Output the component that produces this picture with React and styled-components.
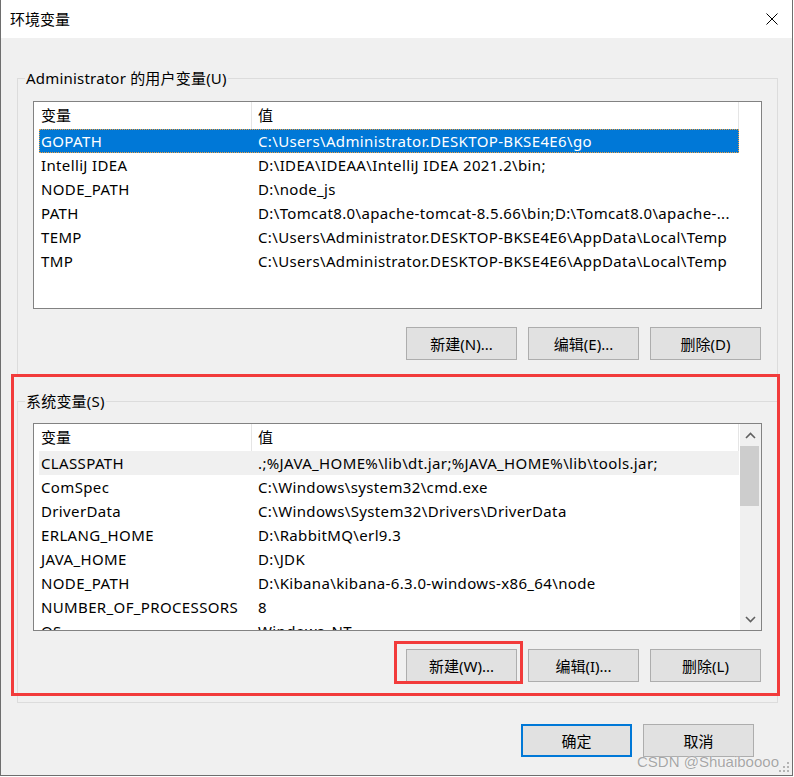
import styled, { createGlobalStyle } from 'styled-components';

const GlobalStyle = createGlobalStyle`
  html, body {
    margin: 0;
    padding: 0;
    background: #ffffff;
  }
  body {
    font-family: "Noto Sans", "Noto Sans CJK SC", sans-serif;
    font-size: 15px;
    color: #000;
  }
  * { box-sizing: border-box; }
`;

const userVars = [
  ['GOPATH', 'C:\\Users\\Administrator.DESKTOP-BKSE4E6\\go'],
  ['IntelliJ IDEA', 'D:\\IDEA\\IDEAA\\IntelliJ IDEA 2021.2\\bin;'],
  ['NODE_PATH', 'D:\\node_js'],
  ['PATH', 'D:\\Tomcat8.0\\apache-tomcat-8.5.66\\bin;D:\\Tomcat8.0\\apache-...'],
  ['TEMP', 'C:\\Users\\Administrator.DESKTOP-BKSE4E6\\AppData\\Local\\Temp'],
  ['TMP', 'C:\\Users\\Administrator.DESKTOP-BKSE4E6\\AppData\\Local\\Temp'],
];

const systemVars = [
  ['CLASSPATH', '.;%JAVA_HOME%\\lib\\dt.jar;%JAVA_HOME%\\lib\\tools.jar;'],
  ['ComSpec', 'C:\\Windows\\system32\\cmd.exe'],
  ['DriverData', 'C:\\Windows\\System32\\Drivers\\DriverData'],
  ['ERLANG_HOME', 'D:\\RabbitMQ\\erl9.3'],
  ['JAVA_HOME', 'D:\\JDK'],
  ['NODE_PATH', 'D:\\Kibana\\kibana-6.3.0-windows-x86_64\\node'],
  ['NUMBER_OF_PROCESSORS', '8'],
  ['OS', 'Windows_NT'],
];

const Chevron = ({ up }) => (
  <svg width="11" height="7" viewBox="0 0 11 7">
    <path
      d={up ? 'M1 6 L5.5 1.5 L10 6' : 'M1 1 L5.5 5.5 L10 1'}
      fill="none"
      stroke="#606060"
      strokeWidth="1.6"
    />
  </svg>
);

const VarList = ({ rows, selected, hover, scroll }) => (
  <ListBox>
    <ListMain>
      <HeaderRow>
        <HeaderCell>变量</HeaderCell>
        <HeaderCell $pad={6}>值</HeaderCell>
      </HeaderRow>
      {rows.map(([name, value], i) => (
        <Row key={name + i} $selected={i === selected} $hover={i === hover}>
          <Cell $pad={2}>{name}</Cell>
          <Cell $pad={7}>{value}</Cell>
        </Row>
      ))}
    </ListMain>
    {scroll && (
      <Scrollbar>
        <ScrollArrow>
          <Chevron up />
        </ScrollArrow>
        <Thumb />
        <ScrollTrack />
        <ScrollArrow>
          <Chevron />
        </ScrollArrow>
      </Scrollbar>
    )}
  </ListBox>
);

const App = () => {
  return (
    <>
      <GlobalStyle />
      <Window>
        <TitleBar>
          <Title>环境变量</Title>
          <CloseButton>
            <svg width="12" height="12" viewBox="0 0 12 12">
              <path d="M0.5 0.5 L11.5 11.5 M11.5 0.5 L0.5 11.5" stroke="#000" strokeWidth="1" />
            </svg>
          </CloseButton>
        </TitleBar>
        <Body>
          <Group>
            <Legend>Administrator 的用户变量(U)</Legend>
            <GroupContent $top={13} $bottom={15}>
              <VarList rows={userVars} selected={0} />
              <ButtonRow>
                <Button>新建(N)...</Button>
                <Button>编辑(E)...</Button>
                <Button>删除(D)</Button>
              </ButtonRow>
            </GroupContent>
          </Group>
          <Group $gap={15}>
            <Legend>系统变量(S)</Legend>
            <GroupContent $top={12} $bottom={20}>
              <VarList rows={systemVars} hover={0} scroll />
              <ButtonRow>
                <Button>新建(W)...</Button>
                <Button>编辑(I)...</Button>
                <Button>删除(L)</Button>
              </ButtonRow>
            </GroupContent>
          </Group>
          <Footer>
            <Button $primary>确定</Button>
            <Button>取消</Button>
          </Footer>
        </Body>

        <Mark $left={10} $top={374} $width={769} $height={322} />
        <Mark $left={393} $top={641} $width={129} $height={43} />
        <Watermark>CSDN @Shuaiboooo</Watermark>
        <Grip>
          <svg width="12" height="12" viewBox="0 0 12 12" fill="#b4b4b4">
            <rect x="8" y="0" width="2" height="2" />
            <rect x="4" y="4" width="2" height="2" />
            <rect x="8" y="4" width="2" height="2" />
            <rect x="0" y="8" width="2" height="2" />
            <rect x="4" y="8" width="2" height="2" />
            <rect x="8" y="8" width="2" height="2" />
          </svg>
        </Grip>
      </Window>
    </>
  );
};

const Window = styled.div`
  position: relative;
  width: 793px;
  height: 776px;
  display: flex;
  flex-direction: column;
  border-left: 1px solid #6e6e6e;
  border-right: 1px solid #6e6e6e;
  border-bottom: 1px solid #6e6e6e;
  overflow: hidden;
`;

const TitleBar = styled.div`
  height: 38px;
  flex: none;
  display: flex;
  align-items: center;
  justify-content: space-between;
  padding: 0 14px 0 9px;
  background: #ffffff;
`;

const Title = styled.div`
  font-size: 15px;
  line-height: 20px;
`;

const CloseButton = styled.div`
  width: 12px;
  height: 12px;
  display: flex;
`;

const Body = styled.div`
  flex: 1;
  background: #f0f0f0;
  padding: 30px 14px 0 16px;
`;

const Group = styled.fieldset`
  margin: ${(p) => p.$gap || 0}px 0 0 0;
  padding: 0;
  min-width: 0;
  border: 1px solid #dcdcdc;
`;

const Legend = styled.legend`
  margin-left: 7px;
  padding: 0 1px;
  font-size: 15px;
  line-height: 20px;
  letter-spacing: 0.2px;
  color: #000;
`;

const GroupContent = styled.div`
  padding: ${(p) => p.$top}px 15px ${(p) => p.$bottom}px 15px;
`;

const ListBox = styled.div`
  height: 208px;
  border: 1px solid #828282;
  background: #ffffff;
  display: flex;
  overflow: hidden;
`;

const ListMain = styled.div`
  flex: 1;
  overflow: hidden;
`;

const HeaderRow = styled.div`
  display: grid;
  grid-template-columns: 218px 487px;
  height: 27px;
`;

const HeaderCell = styled.div`
  padding-left: ${(p) => p.$pad || 7}px;
  line-height: 27px;
  border-right: 1px solid #e5e5e5;
`;

const Row = styled.div`
  display: grid;
  grid-template-columns: 212px 488px;
  width: 700px;
  height: 24px;
  margin-left: 5px;
  background: ${(p) => (p.$selected ? '#0078d7' : p.$hover ? '#f0f0f0' : 'transparent')};
  color: ${(p) => (p.$selected ? '#ffffff' : '#000')};
  outline: ${(p) => (p.$selected ? '1px dotted #f0a040' : 'none')};
  outline-offset: -1px;
`;

const Cell = styled.div`
  padding-left: ${(p) => p.$pad}px;
  line-height: 24px;
  letter-spacing: 0.36px;
  white-space: nowrap;
  overflow: hidden;
`;

const Scrollbar = styled.div`
  width: 21px;
  flex: none;
  background: #f0f0f0;
  display: flex;
  flex-direction: column;
`;

const ScrollArrow = styled.div`
  height: 22px;
  display: flex;
  align-items: center;
  justify-content: center;
  padding-right: 1px;
`;

const Thumb = styled.div`
  height: 60px;
  margin: 0 2px 0 0;
  background: #cdcdcd;
`;

const ScrollTrack = styled.div`
  flex: 1;
`;

const ButtonRow = styled.div`
  display: flex;
  justify-content: flex-end;
  gap: 11px;
  margin-top: 18px;
  padding-right: 1px;
`;

const Button = styled.div`
  width: 111px;
  height: 33px;
  display: flex;
  align-items: center;
  justify-content: center;
  background: #e1e1e1;
  border: ${(p) => (p.$primary ? '2px solid #0078d7' : '1px solid #adadad')};
  font-size: 15px;
  color: #000;
`;

const Footer = styled.div`
  display: flex;
  justify-content: flex-end;
  gap: 11px;
  margin-top: 21px;
  padding-right: 24px;
`;

const Mark = styled.div`
  position: absolute;
  left: ${(p) => p.$left}px;
  top: ${(p) => p.$top}px;
  width: ${(p) => p.$width}px;
  height: ${(p) => p.$height}px;
  border: 3px solid #f23b3b;
  pointer-events: none;
`;

const Watermark = styled.div`
  position: absolute;
  right: 13px;
  bottom: 3px;
  font-family: "Liberation Sans", Arial, sans-serif;
  font-size: 15px;
  line-height: 20px;
  color: rgba(150, 150, 150, 0.85);
  text-shadow: 0 0 1px #ffffff;
`;

const Grip = styled.div`
  position: absolute;
  right: 1px;
  bottom: 1px;
  width: 12px;
  height: 12px;
  display: flex;
`;

export default App;
